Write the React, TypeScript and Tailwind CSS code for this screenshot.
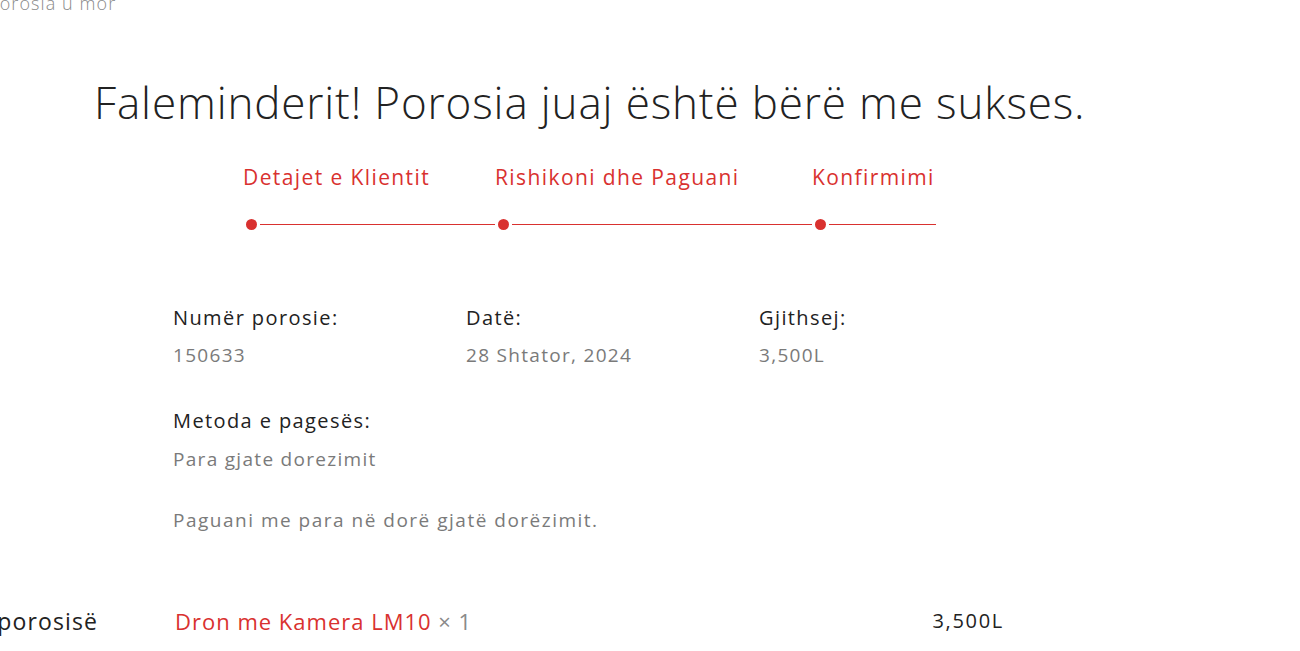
import React from "react";

const steps = [
  { label: "Detajet e Klientit", width: "w-[252px]" },
  { label: "Rishikoni dhe Paguani", width: "w-[317px]" },
  { label: "Konfirmimi", width: "w-[124px]" },
];

const details = [
  { label: "Numër porosie:", value: "150633" },
  { label: "Datë:", value: "28 Shtator, 2024" },
  { label: "Gjithsej:", value: "3,500L" },
];

export default function App() {
  return (
    <div
      className="relative h-[651px] w-[1300px] overflow-hidden bg-white text-[#222]"
      style={{ fontFamily: '"Open Sans", "Noto Sans", sans-serif' }}
    >
      {/* breadcrumb text cut off at the top */}
      <p className="-mt-[9px] -ml-[12px] text-[18px] font-light leading-[24px] tracking-[1.1px] text-[#8a8a8a]">
        Porosia u mor
      </p>

      <h1 className="mt-[59px] ml-[94px] text-[44px] font-light leading-[56px] tracking-[0.85px] text-[#222]">
        Faleminderit! Porosia juaj është bërë me sukses.
      </h1>

      {/* checkout steps */}
      <div className="mt-[32px] ml-[243px] flex">
        {steps.map((s) => (
          <div key={s.label} className={`flex flex-col ${s.width}`}>
            <span className="whitespace-nowrap text-[21px] leading-[30px] tracking-[1.4px] text-[#d9312f]">
              {s.label}
            </span>
            <div className="mt-[27px] flex items-center">
              <span className="ml-[3px] h-[11px] w-[11px] shrink-0 rounded-full bg-[#d9312f]" />
              <span className="ml-[3px] h-px flex-1 bg-[#d9312f]" />
            </div>
          </div>
        ))}
      </div>

      {/* order summary */}
      <div className="mt-[74px] ml-[173px]">
        <div className="grid w-[879px] grid-cols-3">
          {details.map((d) => (
            <div key={d.label}>
              <p className="text-[20px] leading-[28px] tracking-[1.4px] text-[#222]">{d.label}</p>
              <p className="mt-[9px] text-[19px] leading-[28px] tracking-[1.3px] text-[#7a7a7a]">{d.value}</p>
            </div>
          ))}
        </div>

        <p className="mt-[38px] text-[20px] leading-[28px] tracking-[1.4px] text-[#222]">Metoda e pagesës:</p>
        <p className="mt-[10px] text-[19px] leading-[28px] tracking-[1.3px] text-[#7a7a7a]">Para gjate dorezimit</p>
        <p className="mt-[33px] text-[19px] leading-[28px] tracking-[1.5px] text-[#7a7a7a]">
          Paguani me para në dorë gjatë dorëzimit.
        </p>
      </div>

      {/* ordered items */}
      <div className="mt-[71px] flex items-center">
        <span className="-ml-[116px] w-[291px] whitespace-nowrap text-[23px] font-medium leading-[32px] tracking-[1.1px] text-[#222]">
          Detajet e porosisë
        </span>
        <span className="text-[22px] leading-[32px] tracking-[1px] text-[#d9312f]">
          Dron me Kamera LM10 <span className="text-[#8a8a8a]">× 1</span>
        </span>
        <span className="ml-auto mr-[296px] text-[20px] leading-[32px] tracking-[1.7px] text-[#222]">3,500L</span>
      </div>
    </div>
  );
}
